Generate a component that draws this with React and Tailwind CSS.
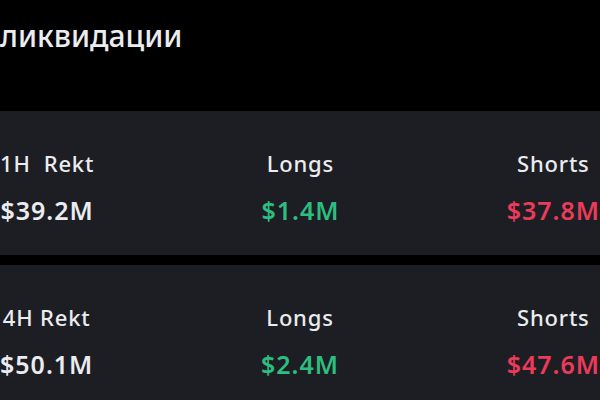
import React from "react";

const rows = [
  { label: "1H\u00a0 Rekt", total: "$39.2M", longs: "$1.4M", shorts: "$37.8M" },
  { label: "4H Rekt", total: "$50.1M", longs: "$2.4M", shorts: "$47.6M" },
];

const Stat = ({ label, value, color }) => (
  <div className="flex flex-col items-center">
    <div className="text-[22px] leading-[28px] tracking-[0.8px] text-[#eaecef] font-medium whitespace-pre">{label}</div>
    <div className={`mt-[18px] text-[25px] leading-[30px] tracking-[1px] font-semibold ${color}`}>{value}</div>
  </div>
);

const App = () => {
  return (
    <div className="w-[600px] h-[400px] overflow-hidden bg-black" style={{ fontFamily: "'Noto Sans', sans-serif" }}>
      <div className="h-[111px] pt-[16px]">
        <h1 className="text-[30px] leading-[40px] font-medium text-[#eaecef]">ликвидации</h1>
      </div>
      <div className="flex flex-col gap-[10px]">
        {rows.map((r) => (
          <div key={r.label} className="h-[144px] bg-[#1d1e23] flex justify-between pt-[38px]">
            <Stat label={r.label} value={r.total} color="text-[#eaecef]" />
            <Stat label="Longs" value={r.longs} color="text-[#2dbd80]" />
            <Stat label="Shorts" value={r.shorts} color="text-[#ec3b5a]" />
          </div>
        ))}
      </div>
    </div>
  );
};

export default App;
